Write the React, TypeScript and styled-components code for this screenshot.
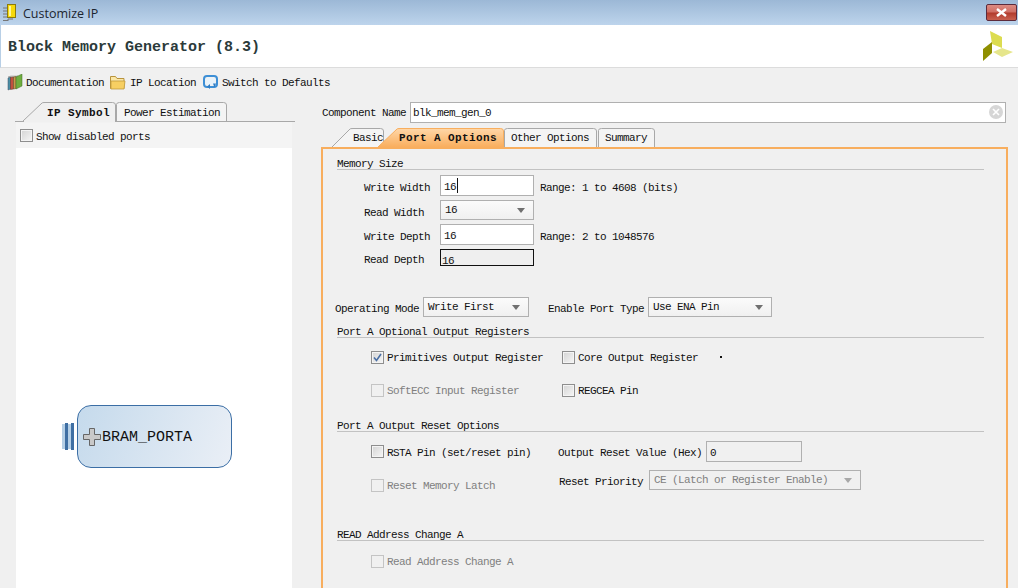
import React from 'react';
import styled, { createGlobalStyle } from 'styled-components';

const GlobalStyle = createGlobalStyle`
  html, body {
    margin: 0;
    padding: 0;
    background: #f0f0f0;
    overflow: hidden;
  }
  * {
    box-sizing: border-box;
  }
`;

const Window = styled.div`
  width: 1018px;
  height: 588px;
  display: flex;
  flex-direction: column;
  overflow: hidden;
  background: #f0f0f0;
  color: #111;
  font-family: 'Liberation Mono', monospace;
  font-size: 11px;
  letter-spacing: -0.6px;
`;

const TitleBar = styled.div`
  height: 25px;
  flex: none;
  display: flex;
  align-items: center;
  padding: 0 1px 0 3px;
  background: linear-gradient(#9cb8d6, #bdd4ec);
`;

const WindowTitle = styled.span`
  margin-left: 6px;
  padding-top: 2px;
  font-family: 'Open Sans', 'Liberation Sans', sans-serif;
  font-size: 12.5px;
  letter-spacing: 0;
  color: #1c2530;
`;

const CloseButton = styled.div`
  width: 31px;
  height: 17px;
  margin-left: auto;
  margin-top: -1px;
  display: flex;
  align-items: center;
  justify-content: center;
  border: 1px solid #5c2b3c;
  border-radius: 2px;
  background: linear-gradient(#dc8b82 0%, #cf6d63 48%, #b13a2c 52%, #c8604f 100%);
`;

const Header = styled.div`
  height: 43px;
  flex: none;
  display: flex;
  align-items: center;
  justify-content: space-between;
  padding: 0 5px 0 7px;
  background: #fff;
  border-left: 1px solid #b8cfe6;
  border-bottom: 1px solid #dcdcdc;
`;

const Title = styled.h1`
  margin: 0;
  padding-top: 2px;
  font-size: 15px;
  font-weight: bold;
  letter-spacing: 0;
  color: #2b3a3a;
`;

const Toolbar = styled.div`
  height: 34px;
  flex: none;
  display: flex;
  align-items: center;
  padding: 0 0 6px 7px;
`;

const ToolItem = styled.div<{ $gap: number; $inner: number }>`
  display: flex;
  align-items: center;
  gap: ${(p) => p.$inner}px;
  margin-right: ${(p) => p.$gap}px;
`;

const ToolLabel = styled.span`
  padding-top: 2px;
`;

const Main = styled.div`
  flex: 1;
  min-height: 0;
  display: flex;
  padding-left: 15px;
`;

const LeftPane = styled.div`
  width: 280px;
  margin-right: 26px;
  flex: none;
  display: flex;
  flex-direction: column;
`;

const LeftTabs = styled.div`
  height: 20px;
  flex: none;
  display: flex;
  align-items: flex-end;
  padding-left: 8px;
  border-bottom: 1px solid #a8a8a8;
`;

const Tab = styled.div<{
  $width: number;
  $pad: number;
  $line: number;
  $shift?: number;
  $bold?: boolean;
  $front?: boolean;
}>`
  position: relative;
  width: ${(p) => p.$width}px;
  height: 19px;
  flex: none;
  margin-left: ${(p) => p.$shift ?? 0}px;
  padding-left: ${(p) => p.$pad}px;
  line-height: ${(p) => p.$line}px;
  font-weight: ${(p) => (p.$bold ? 'bold' : 'normal')};
  letter-spacing: ${(p) => (p.$bold ? '0.4px' : '-0.6px')};
  z-index: ${(p) => (p.$front ? 2 : 1)};
  white-space: nowrap;
`;

const TabShape = styled.svg`
  position: absolute;
  left: 0;
  top: 0;
  width: 100%;
  height: 100%;
  overflow: visible;
  z-index: -1;
`;

const LeftBody = styled.div`
  flex: 1;
  display: flex;
  flex-direction: column;
  padding: 0 3px 0 1px;
`;

const ShowPorts = styled.div`
  height: 26px;
  flex: none;
  display: flex;
  align-items: center;
  gap: 3px;
  padding: 1px 0 0 4px;
  background: #f4f4f4;
`;

const PortsLabel = styled.span`
  padding-top: 2px;
`;

const Canvas = styled.div`
  flex: 1;
  display: flex;
  align-items: flex-start;
  padding: 257px 0 0 46px;
  background: #fff;
`;

const Pin = styled.div`
  width: 15px;
  height: 27px;
  margin-top: 18px;
  flex: none;
  background:
    linear-gradient(
      to right,
      transparent 0 3px,
      #3f6fa3 3px 6px,
      transparent 6px 9px,
      #3f6fa3 9px 12px,
      transparent 12px 15px
    ),
    linear-gradient(#b5cfe6, #b5cfe6) 0 1px / 9px 25px no-repeat;
`;

const Block = styled.div`
  width: 155px;
  height: 63px;
  flex: none;
  display: flex;
  align-items: center;
  gap: 1px;
  padding: 0 0 0 5px;
  border: 1px solid #3b6ea5;
  border-radius: 14px;
  background: linear-gradient(110deg, #c5daec, #eaeff6);
`;

const BlockName = styled.span`
  padding-top: 2px;
  font-size: 15px;
  letter-spacing: 0;
  color: #111;
`;

const RightPane = styled.div`
  width: 687px;
  flex: none;
  display: flex;
  flex-direction: column;
`;

const NameRow = styled.div`
  height: 20px;
  flex: none;
  display: flex;
  align-items: center;
  padding-left: 1px;
`;

const NameLabel = styled.span`
  width: 88px;
  padding-top: 2px;
  flex: none;
`;

const NameBox = styled.div`
  width: 596px;
  height: 21px;
  display: flex;
  align-items: center;
  justify-content: space-between;
  padding: 0 2px 0 2px;
  background: #fff;
  border: 1px solid #b0b0b0;
`;

const NameValue = styled.span`
  padding-top: 2px;
`;

const ClearIcon = styled.div`
  width: 14px;
  height: 14px;
  display: flex;
  align-items: center;
  justify-content: center;
  border-radius: 50%;
  background: #d6d6d6;
`;

const RightTabs = styled.div`
  height: 20px;
  margin-top: 5px;
  flex: none;
  display: flex;
  align-items: flex-end;
  padding-left: 11px;
`;

const Panel = styled.div`
  flex: 1;
  min-height: 0;
  padding: 8px 22px 0 14px;
  border: 2px solid #f8ae5e;
  border-bottom: none;
`;

const Heading = styled.div<{ $top: number }>`
  height: 13px;
  margin-top: ${(p) => p.$top}px;
  line-height: 14px;
  border-bottom: 1px solid #c2c2c2;
`;

const FieldRow = styled.div<{ $top: number; $height: number }>`
  height: ${(p) => p.$height}px;
  margin-top: ${(p) => p.$top}px;
  display: flex;
  align-items: center;
  padding-left: 27px;
`;

const FieldLabel = styled.span`
  width: 76px;
  padding-top: 5px;
  flex: none;
`;

const Hint = styled.span`
  margin-left: 6px;
  padding-top: 5px;
`;

const InputBox = styled.div<{ $width: number; $disabled?: boolean }>`
  width: ${(p) => p.$width}px;
  height: 100%;
  flex: none;
  display: flex;
  align-items: center;
  padding: 2px 0 0 3px;
  background: ${(p) => (p.$disabled ? 'transparent' : '#fff')};
  border: 1px solid #b0b0b0;
`;

const TextCaret = styled.span`
  width: 1px;
  height: 15px;
  margin: -2px 0 0 1px;
  background: #111;
`;

const ReadOnlyBox = styled.div`
  width: 94px;
  height: 100%;
  flex: none;
  padding-left: 1px;
  line-height: 22px;
  border: 1px solid #111;
  background: #efefef;
`;

const SelectBox = styled.div<{ $width: number; $disabled?: boolean }>`
  position: relative;
  width: ${(p) => p.$width}px;
  height: 20px;
  flex: none;
  padding-left: 4px;
  line-height: 18px;
  color: ${(p) => (p.$disabled ? '#7f7f7f' : '#111')};
  border: 1px solid #b0b0b0;
  background: ${(p) => (p.$disabled ? '#f0f0f0' : 'linear-gradient(#fbfbfb, #f0f0f0)')};

  &::after {
    content: '';
    position: absolute;
    right: 8px;
    top: 7px;
    border-left: 4px solid transparent;
    border-right: 4px solid transparent;
    border-top: 5px solid ${(p) => (p.$disabled ? '#a8a8a8' : '#707070')};
  }
`;

const ModeRow = styled.div`
  height: 20px;
  margin: 31px 0 0 -2px;
  display: flex;
  align-items: center;
`;

const ModeLabel = styled.span<{ $left?: number }>`
  margin-left: ${(p) => p.$left ?? 0}px;
  margin-right: 4px;
  padding-top: 3px;
`;

const CheckRow = styled.div<{ $top: number; $height?: number }>`
  height: ${(p) => p.$height ?? 14}px;
  margin-top: ${(p) => p.$top}px;
  display: flex;
  align-items: center;
  padding-left: 34px;
`;

const CheckItem = styled.div<{ $width?: number; $shift?: number; $disabled?: boolean }>`
  width: ${(p) => (p.$width ? `${p.$width}px` : 'auto')};
  margin-top: ${(p) => p.$shift ?? 0}px;
  flex: none;
  display: flex;
  align-items: center;
  gap: 3px;
  color: ${(p) => (p.$disabled ? '#7f7f7f' : '#111')};
`;

const CheckText = styled.span`
  padding-top: 2px;
`;

const Box = styled.span<{ $disabled?: boolean }>`
  width: 13px;
  height: 13px;
  flex: none;
  display: flex;
  align-items: center;
  justify-content: center;
  border: 1px solid ${(p) => (p.$disabled ? '#c4c4c4' : '#8e8e8e')};
  background: ${(p) =>
    p.$disabled ? '#f0f0f0' : 'linear-gradient(135deg, #d4d4d4, #f6f6f6)'};
  box-shadow: ${(p) => (p.$disabled ? 'none' : 'inset 0 0 0 1px #f4f4f4')};
`;

const Dot = styled.span`
  width: 2px;
  height: 2px;
  margin-left: 22px;
  background: #111;
`;

const InlineLabel = styled.span<{ $shift?: number; $right?: number }>`
  margin-right: ${(p) => p.$right ?? 4}px;
  margin-top: ${(p) => p.$shift ?? 0}px;
  flex: none;
`;

const ChipIcon = () => (
  <svg width="14" height="17" viewBox="0 0 14 17">
    <path d="M0 4h4M0 7h4M0 10h4M0 13h4M10 15h-5v2M0 16.5h5" stroke="#777" fill="none" />
    <rect x="4.5" y="0.5" width="8" height="13" fill="#f6d90c" stroke="#8a7a10" />
    <rect x="6" y="2" width="2" height="10" fill="#fff59a" />
  </svg>
);

const BooksIcon = () => (
  <svg width="16" height="17" viewBox="0 0 16 17">
    <path d="M1 3l3-1 7 0-3 1z" fill="#e8e4d4" stroke="#777" strokeWidth="0.4" />
    <path d="M1 4l2.5-1v12l-2.5 1z" fill="#4b8fa5" stroke="#3d4f66" strokeWidth="0.5" />
    <path d="M3.5 3.5l3-.5v12l-3 .5z" fill="#c2503e" stroke="#5a2d26" strokeWidth="0.5" />
    <path d="M6.5 3l2.5-.5v12l-2.5 .5z" fill="#c99a4c" stroke="#5a4a26" strokeWidth="0.5" />
    <path d="M9 3l6-3v12l-6 3z" fill="#6fae3f" stroke="#3e6a22" strokeWidth="0.5" />
  </svg>
);

const FolderIcon = () => (
  <svg width="16" height="15" viewBox="0 0 16 15">
    <path d="M0.5 1.5h5l1.5 2h7v10h-13.5z" fill="#fbe7a6" stroke="#b8933c" />
    <path d="M1 6h14l-1 8h-13z" fill="#f7cf62" stroke="#c09a3e" strokeWidth="0.8" />
  </svg>
);

const RefreshIcon = () => (
  <svg width="15" height="15" viewBox="0 0 15 15">
    <rect x="1" y="1" width="13" height="11" rx="3" fill="none" stroke="#3d8fd6" strokeWidth="2" />
    <rect x="3" y="3" width="9" height="7" fill="#e8f3fb" />
    <path d="M7 14l-3-2.5 3-2.5z" fill="#2f7cc4" />
    <path d="M10 8.5h3l-1.5 4z" fill="#2f7cc4" />
  </svg>
);

const XilinxLogo = () => (
  <svg width="30" height="30" viewBox="0 0 30 30">
    <path d="M7 0l12 6v11l-10-4z" fill="#dcdc50" />
    <path d="M10 21l9-4 11 4-11 5z" fill="#e6e68c" />
    <path d="M0 18l9-7v11l-9 8z" fill="#8f8f00" />
  </svg>
);

const PlusIcon = () => (
  <svg width="18" height="18" viewBox="0 0 18 18">
    <path d="M6.5 0.5h5v6h6v5h-6v6h-5v-6h-6v-5h6z" fill="#c9c9c9" stroke="#666" />
  </svg>
);

type OutlineProps = { w: number; slant?: number; active?: boolean; orange?: boolean };

const TabOutline = ({ w, slant = 0, active = false, orange = false }: OutlineProps) => (
  <TabShape viewBox={`0 0 ${w} 19`} preserveAspectRatio="none">
    {orange && (
      <defs>
        <linearGradient id="orangeTab" x1="0" y1="0" x2="0" y2="1">
          <stop offset="0" stopColor="#ffd7a8" />
          <stop offset="1" stopColor="#f9ae5e" />
        </linearGradient>
      </defs>
    )}
    <path
      d={`M${slant ? 0 : 0.5} 19${slant ? `L${slant} 1` : 'V2.5'}Q${slant || 0.5} 0.5 ${(slant || 0.5) + 3} 0.5H${w - 3.5}Q${w - 0.5} 0.5 ${w - 0.5} 3V19`}
      fill={orange ? 'url(#orangeTab)' : active ? '#f0f0f0' : '#f4f4f4'}
      stroke={orange ? '#f8ae5e' : '#a8a8a8'}
    />
    {active && !orange && <path d={`M1 19.5H${w - 1}`} stroke="#f0f0f0" strokeWidth="2" />}
  </TabShape>
);

const Check = ({ checked, disabled }: { checked?: boolean; disabled?: boolean }) => (
  <Box $disabled={disabled}>
    {checked && (
      <svg width="9" height="9" viewBox="0 0 9 9">
        <path d="M1 4.5l2.5 3L8 1" fill="none" stroke="#4a6fa5" strokeWidth="1.6" />
      </svg>
    )}
  </Box>
);

const App = () => {
  return (
    <Window>
      <GlobalStyle />
      <TitleBar>
        <ChipIcon />
        <WindowTitle>Customize IP</WindowTitle>
        <CloseButton>
          <svg width="13" height="9" viewBox="0 0 13 9">
            <path d="M2 1l9 7M11 1l-9 7" stroke="#fff" strokeWidth="2.4" />
          </svg>
        </CloseButton>
      </TitleBar>

      <Header>
        <Title>Block Memory Generator (8.3)</Title>
        <XilinxLogo />
      </Header>

      <Toolbar>
        <ToolItem $gap={6} $inner={3}>
          <BooksIcon />
          <ToolLabel>Documentation</ToolLabel>
        </ToolItem>
        <ToolItem $gap={7} $inner={4}>
          <FolderIcon />
          <ToolLabel>IP Location</ToolLabel>
        </ToolItem>
        <ToolItem $gap={0} $inner={4}>
          <RefreshIcon />
          <ToolLabel>Switch to Defaults</ToolLabel>
        </ToolItem>
      </Toolbar>

      <Main>
        <LeftPane>
          <LeftTabs>
            <Tab $width={93} $pad={24} $line={22} $bold $front>
              <TabOutline w={93} slant={19} active />
              IP Symbol
            </Tab>
            <Tab $width={111} $pad={8} $line={22}>
              <TabOutline w={111} />
              Power Estimation
            </Tab>
          </LeftTabs>
          <LeftBody>
            <ShowPorts>
              <Check />
              <PortsLabel>Show disabled ports</PortsLabel>
            </ShowPorts>
            <Canvas>
              <Pin />
              <Block>
                <PlusIcon />
                <BlockName>BRAM_PORTA</BlockName>
              </Block>
            </Canvas>
          </LeftBody>
        </LeftPane>

        <RightPane>
          <NameRow>
            <NameLabel>Component Name</NameLabel>
            <NameBox>
              <NameValue>blk_mem_gen_0</NameValue>
              <ClearIcon>
                <svg width="8" height="8" viewBox="0 0 8 8">
                  <path d="M1 1l6 6M7 1l-6 6" stroke="#fff" strokeWidth="1.6" />
                </svg>
              </ClearIcon>
            </NameBox>
          </NameRow>

          <RightTabs>
            <Tab $width={52} $pad={21} $line={20}>
              <TabOutline w={52} slant={18} />
              Basic
            </Tab>
            <Tab $width={126} $pad={21} $line={20} $shift={-6} $bold $front>
              <TabOutline w={126} slant={19} active orange />
              Port A Options
            </Tab>
            <Tab $width={93} $pad={7} $line={20}>
              <TabOutline w={93} />
              Other Options
            </Tab>
            <Tab $width={57} $pad={7} $line={20} $shift={1}>
              <TabOutline w={57} />
              Summary
            </Tab>
          </RightTabs>

          <Panel>
            <Heading $top={0}>Memory Size</Heading>
            <FieldRow $top={5} $height={21}>
              <FieldLabel>Write Width</FieldLabel>
              <InputBox $width={94}>
                16
                <TextCaret />
              </InputBox>
              <Hint>Range: 1 to 4608 (bits)</Hint>
            </FieldRow>
            <FieldRow $top={4} $height={20}>
              <FieldLabel>Read Width</FieldLabel>
              <SelectBox $width={94}>16</SelectBox>
            </FieldRow>
            <FieldRow $top={4} $height={21}>
              <FieldLabel>Write Depth</FieldLabel>
              <InputBox $width={94}>16</InputBox>
              <Hint>Range: 2 to 1048576</Hint>
            </FieldRow>
            <FieldRow $top={4} $height={17}>
              <FieldLabel>Read Depth</FieldLabel>
              <ReadOnlyBox>16</ReadOnlyBox>
            </FieldRow>

            <ModeRow>
              <ModeLabel>Operating Mode</ModeLabel>
              <SelectBox $width={106}>Write First</SelectBox>
              <ModeLabel $left={19}>Enable Port Type</ModeLabel>
              <SelectBox $width={124}>Use ENA Pin</SelectBox>
            </ModeRow>

            <Heading $top={8}>Port A Optional Output Registers</Heading>
            <CheckRow $top={12}>
              <CheckItem $width={191}>
                <Check checked />
                <CheckText>Primitives Output Register</CheckText>
              </CheckItem>
              <CheckItem>
                <Check />
                <CheckText>Core Output Register</CheckText>
              </CheckItem>
              <Dot />
            </CheckRow>
            <CheckRow $top={19}>
              <CheckItem $width={191} $disabled>
                <Check disabled />
                <CheckText>SoftECC Input Register</CheckText>
              </CheckItem>
              <CheckItem>
                <Check />
                <CheckText>REGCEA Pin</CheckText>
              </CheckItem>
            </CheckRow>

            <Heading $top={22}>Port A Output Reset Options</Heading>
            <CheckRow $top={9} $height={21}>
              <CheckItem $width={187}>
                <Check />
                <CheckText>RSTA Pin (set/reset pin)</CheckText>
              </CheckItem>
              <InlineLabel $shift={2}>Output Reset Value (Hex)</InlineLabel>
              <InputBox $width={96} $disabled>
                0
              </InputBox>
            </CheckRow>
            <CheckRow $top={8} $height={20}>
              <CheckItem $width={188} $shift={10} $disabled>
                <Check disabled />
                <CheckText>Reset Memory Latch</CheckText>
              </CheckItem>
              <InlineLabel $shift={4} $right={6}>
                Reset Priority
              </InlineLabel>
              <SelectBox $width={212} $disabled>
                CE (Latch or Register Enable)
              </SelectBox>
            </CheckRow>

            <Heading $top={38}>READ Address Change A</Heading>
            <CheckRow $top={13}>
              <CheckItem $disabled>
                <Check disabled />
                <CheckText>Read Address Change A</CheckText>
              </CheckItem>
            </CheckRow>
          </Panel>
        </RightPane>
      </Main>
    </Window>
  );
};

export default App;
